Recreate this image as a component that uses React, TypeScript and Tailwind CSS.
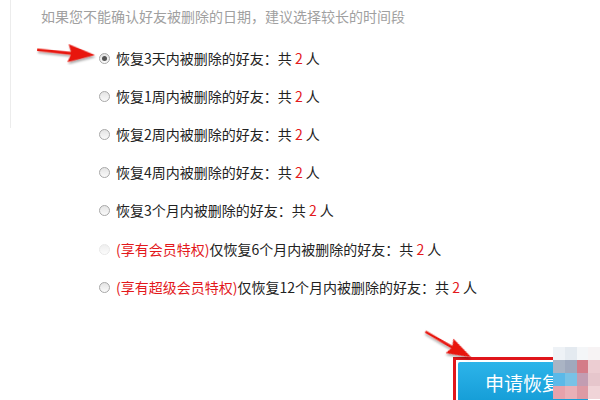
// 恢复被删除好友：选择时间段 + 申请恢复按钮（带标注箭头和马赛克）

const FONT = { fontFamily: '"Noto Sans CJK SC", "Noto Sans", sans-serif' };

type Option = { tag?: string; label: string; checked?: boolean; faded?: boolean };

const OPTIONS: Option[] = [
  { label: "恢复3天内被删除的好友：共", checked: true },
  { label: "恢复1周内被删除的好友：共" },
  { label: "恢复2周内被删除的好友：共" },
  { label: "恢复4周内被删除的好友：共" },
  { label: "恢复3个月内被删除的好友：共" },
  { tag: "(享有会员特权)", label: "仅恢复6个月内被删除的好友：共", faded: true },
  { tag: "(享有超级会员特权)", label: "仅恢复12个月内被删除的好友：共" },
];

// mosaic cells covering the right of the button (rows of colours)
const MOSAIC: string[][] = [
  ["#eef2f6", "#e4eaf0", "#f4f6f8", "#f7f3f4"],
  ["#aab4c4", "#9fa9bd", "#d47c88", "#eccdd2"],
  ["#5bb9e8", "#78c2e6", "#c29db2", "#e6c6cc"],
  ["#e6a2ab", "#e9b0b7", "#dd9aa4", "#f0d4d8"],
];

function Radio({ checked, faded }: { checked?: boolean; faded?: boolean }) {
  return (
    <span
      className={
        "flex h-[11px] w-[11px] shrink-0 items-center justify-center rounded-full border bg-gradient-to-b from-[#e4e4e4] to-[#fafafa] " +
        (faded ? "border-[#d8d8d8] opacity-60" : "border-[#a8a8a8]")
      }
    >
      {checked && <span className="h-[5px] w-[5px] rounded-full bg-[#555]" />}
    </span>
  );
}

function Arrow({ className, rotate }: { className: string; rotate: number }) {
  return (
    <svg className={className} width="62" height="24" viewBox="0 0 62 24" style={{ transform: `rotate(${rotate}deg)` }}>
      <defs>
        <filter id={`sh${rotate}`} x="-20%" y="-40%" width="140%" height="180%">
          <feDropShadow dx="1" dy="2" stdDeviation="1.2" floodColor="#000" floodOpacity="0.35" />
        </filter>
      </defs>
      <path d="M2 9.5 L36 10.5 L33 3 L60 12 L33 21 L36 13.5 L2 12 Z" fill="#e8120c" filter={`url(#sh${rotate})`} />
    </svg>
  );
}

export default function App() {
  return (
    <div className="relative h-[400px] w-[600px] overflow-hidden bg-white text-[14px]" style={FONT}>
      <div className="absolute left-[10px] top-0 h-[128px] border-l border-[#ececec]" />

      <p className="pl-[41px] pt-[6px] leading-[20px] text-[#a0a0a0]">如果您不能确认好友被删除的日期，建议选择较长的时间段</p>

      <ul className="mt-[13px] flex flex-col pl-[99px]">
        {OPTIONS.map((o, i) => (
          <li key={i} className="flex h-[38.2px] items-center gap-[6px] text-[#222]">
            <Radio checked={o.checked} faded={o.faded} />
            <span className="whitespace-nowrap">
              {o.tag && <span className="text-[#e3191c]">{o.tag}</span>}
              {o.label} <span className="text-[#e3191c]">2</span> 人
            </span>
          </li>
        ))}
      </ul>

      <div className="mt-[51px] pl-[453px]">
        <div className="w-[150px] border-[3px] border-[#e0161b] p-[2px]">
          <button className="flex h-[42px] w-[130px] items-center justify-center rounded-[2px] bg-gradient-to-b from-[#2cb4ea] to-[#139cd6] text-[19px] text-white">
            申请恢复
          </button>
        </div>
      </div>

      <Arrow className="absolute left-[35px] top-[41px]" rotate={4} />
      <Arrow className="absolute left-[420px] top-[333px] w-[56px]" rotate={28} />

      <div className="absolute left-[553px] top-[347px] grid grid-cols-4">
        {MOSAIC.flat().map((c, i) => (
          <div key={i} className="h-[13px] w-[13px] blur-[0.5px]" style={{ background: c }} />
        ))}
      </div>
    </div>
  );
}
